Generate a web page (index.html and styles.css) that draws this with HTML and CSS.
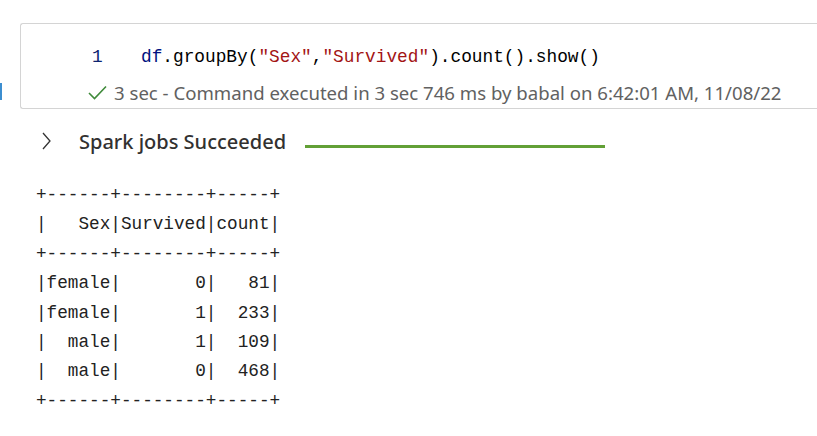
FILE: index.html
```html
<!DOCTYPE html>
<html>
<head>
<meta charset="utf-8">
<link rel="stylesheet" href="styles.css">
</head>
<body>
<div class="cell-row">
  <div class="marker"></div>
  <div class="cell">
    <div class="code-line">
      <span class="ln">1</span><span class="code"><span class="var">df</span>.groupBy(<span class="str">"Sex"</span>,<span class="str">"Survived"</span>).count().show()</span>
    </div>
    <div class="status">
      <svg class="check" width="19" height="15" viewBox="0 0 19 15"><polyline points="1,8 6.5,13.5 18,1.5" fill="none" stroke="#3f8a3a" stroke-width="1.6"/></svg>
      <span>3 sec - Command executed in 3 sec 746 ms by babal on 6:42:01 AM, 11/08/22</span>
    </div>
  </div>
</div>
<div class="jobs">
  <svg class="chev" width="9" height="18" viewBox="0 0 9 18"><polyline points="1,1 8,9 1,17" fill="none" stroke="#333" stroke-width="1.3"/></svg>
  <span class="jobs-label">Spark jobs Succeeded</span>
  <div class="bar"></div>
</div>
<pre class="out">+------+--------+-----+
|   Sex|Survived|count|
+------+--------+-----+
|female|       0|   81|
|female|       1|  233|
|  male|       1|  109|
|  male|       0|  468|
+------+--------+-----+</pre>
</body>
</html>
```
FILE: styles.css
```css
html, body {
  margin: 0;
  padding: 0;
  background: #fff;
}
body {
  width: 817px;
  height: 436px;
  overflow: hidden;
  font-family: "Noto Sans", "Open Sans", sans-serif;
}
.cell-row {
  display: flex;
  margin-top: 23px;
  height: 86px;
}
.marker {
  width: 2px;
  height: 17px;
  background: #3c8ed0;
  align-self: flex-end;
  margin-bottom: 9px;
  margin-right: 18px;
  flex: none;
}
.cell {
  flex: none;
  width: 820px;
  box-sizing: border-box;
  border: 1px solid #d4d4d4;
  border-right: none;
  border-radius: 3px 0 0 3px;
  padding-left: 71px;
}
.code-line {
  display: flex;
  height: 20px;
  line-height: 20px;
  margin-top: 23px;
  font-family: "Liberation Mono", monospace;
  font-size: 17.8px;
  color: #000;
}
.ln {
  width: 49px;
  color: #0d2470;
}
.var { color: #001080; }
.str { color: #a31515; }
.status {
  display: flex;
  align-items: center;
  margin-top: 13px;
  margin-left: -4px;
  height: 24px;
  font-size: 18.6px;
  color: #616161;
  white-space: nowrap;
}
.check {
  margin-right: 7px;
  flex: none;
}
.jobs {
  display: flex;
  align-items: center;
  height: 30px;
  margin-top: 17px;
  padding-left: 42px;
}
.chev {
  flex: none;
  margin-right: 28px;
}
.jobs-label {
  font-size: 20px;
  font-weight: 500;
  color: #323130;
  white-space: nowrap;
}
.bar {
  width: 300px;
  height: 3px;
  background: #62a036;
  margin-left: 19px;
  margin-top: 10px;
}
.out {
  margin: 25px 0 0 36px;
  font-family: "Liberation Mono", monospace;
  font-size: 17.7px;
  line-height: 29.4px;
  color: #222;
}
```
